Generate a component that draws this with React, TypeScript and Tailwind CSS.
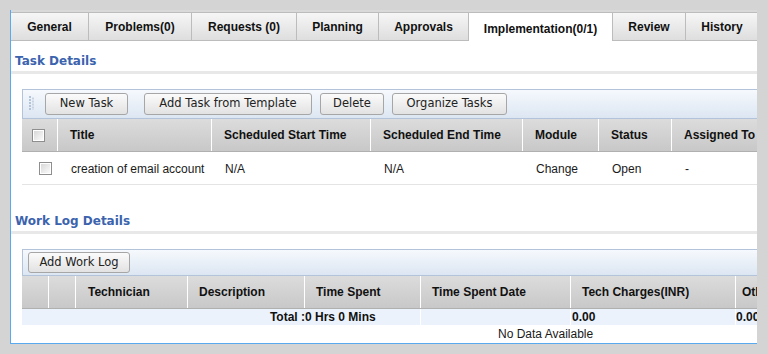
import React from "react";

const tabs = [
  { label: "General", w: 78 },
  { label: "Problems(0)", w: 103 },
  { label: "Requests (0)", w: 105 },
  { label: "Planning", w: 82 },
  { label: "Approvals", w: 90 },
  { label: "Implementation(0/1)", w: 144, active: true },
  { label: "Review", w: 73 },
  { label: "History", w: 73 },
];

function Checkbox() {
  return (
    <div className="w-[13px] h-[13px] border border-[#8e8e8e] bg-white p-[1px]">
      <div className="w-full h-full bg-linear-to-br from-[#d8d8d8] to-[#fafafa]" />
    </div>
  );
}

function Btn({ label, w }: { label: string; w: number }) {
  return (
    <div
      className="h-[22px] flex items-center justify-center border border-[#a6a6a6] rounded-[3px] bg-linear-to-b from-[#fbfbfb] to-[#e2e2e2] text-[11.5px] text-[#222] shrink-0 whitespace-nowrap"
      style={{ width: w, fontFamily: '"DejaVu Sans", Verdana, sans-serif' }}
    >
      {label}
    </div>
  );
}

function Grip() {
  return (
    <svg width="6" height="14" viewBox="0 0 6 14" className="shrink-0">
      {[0, 3, 6, 9, 12].map((y) => (
        <g key={y}>
          <rect x="0" y={y} width="2" height="2" fill="#b3c3d8" />
          <rect x="3" y={y + 1.5} width="2" height="2" fill="#c8d4e4" />
        </g>
      ))}
    </svg>
  );
}

const taskCols = [
  { label: "Title", w: 154 },
  { label: "Scheduled Start Time", w: 159 },
  { label: "Scheduled End Time", w: 152 },
  { label: "Module", w: 76 },
  { label: "Status", w: 73 },
  { label: "Assigned To", w: 110 },
];
const taskRow = ["creation of email account", "N/A", "N/A", "Change", "Open", "-"];

const wlCols = [
  { label: "", w: 27 },
  { label: "", w: 27 },
  { label: "Technician", w: 112, pl: 12 },
  { label: "Description", w: 117, pl: 11 },
  { label: "Time Spent", w: 116, pl: 11 },
  { label: "Time Spent Date", w: 150, pl: 11 },
  { label: "Tech Charges(INR)", w: 165, pl: 11 },
  { label: "Other Charges(INR)", w: 160, pl: 6 },
];

function SectionTitle({ text, h, pb }: { text: string; h: number; pb: number }) {
  return (
    <div
      className="flex items-end pl-[4px] text-[12px] font-bold text-[#3b63ae] leading-[14px] shrink-0"
      style={{ height: h, paddingBottom: pb, fontFamily: '"DejaVu Sans", Tahoma, sans-serif' }}
    >
      {text}
    </div>
  );
}

export default function App() {
  return (
    <div
      className="w-[768px] h-[354px] bg-[#d4d4d4] pt-[10px] pl-[10px] overflow-hidden"
      style={{ fontFamily: '"Liberation Sans", Arial, sans-serif' }}
    >
      <div className="w-[747px] h-[334px] bg-white border-l border-b border-[#58a9ee] overflow-hidden flex flex-col">
        {/* Tabs */}
        <div className="flex pt-[2px] bg-[#d9d9d9] shrink-0">
          {tabs.map((t) =>
            t.active ? (
              <div
                key={t.label}
                className="h-[29px] bg-white border-t border-r border-[#bcbcbc] flex items-center justify-center pt-[4px] text-[12px] font-bold text-[#111] shrink-0"
                style={{ width: t.w }}
              >
                {t.label}
              </div>
            ) : (
              <div
                key={t.label}
                className="h-[29px] bg-linear-to-b from-[#f6f6f6] to-[#dedede] border-t border-r border-b border-[#bcbcbc] flex items-center justify-center text-[12px] font-bold text-[#111] shrink-0"
                style={{ width: t.w }}
              >
                {t.label}
              </div>
            )
          )}
        </div>

        <SectionTitle text="Task Details" h={30} pb={3} />
        <div className="h-[3px] bg-[#e8e8e8] shrink-0" />

        {/* Task toolbar + table */}
        <div className="pl-[11px] pt-[15px] shrink-0">
          <div className="w-[760px] h-[30px] border-t border-b border-l border-[#b2c3da] bg-linear-to-b from-[#f6f9fd] to-[#dce6f2] flex items-start pt-[3px] pl-[6px]">
            <div className="mt-[3px] mr-[10px]">
              <Grip />
            </div>
            <Btn label="New Task" w={83} />
            <div className="w-[16px] shrink-0" />
            <Btn label="Add Task from Template" w={168} />
            <div className="w-[8px] shrink-0" />
            <Btn label="Delete" w={64} />
            <div className="w-[8px] shrink-0" />
            <Btn label="Organize Tasks" w={115} />
          </div>

          {/* header */}
          <div className="flex h-[33px] border-b border-[#b0b0b0] bg-linear-to-b from-[#dcdcdc] to-[#c8c8c8] w-[770px]">
            <div className="w-[36px] shrink-0 border-r border-white flex items-center pl-[10px]">
              <Checkbox />
            </div>
            {taskCols.map((c) => (
              <div
                key={c.label}
                className="shrink-0 border-r border-white flex items-center pl-[12px] text-[12px] font-bold text-[#111]"
                style={{ width: c.w }}
              >
                {c.label}
              </div>
            ))}
          </div>

          {/* row */}
          <div className="flex h-[33px] border-b border-[#e4e4e4] w-[770px]">
            <div className="w-[36px] shrink-0 flex items-center pl-[17px]">
              <Checkbox />
            </div>
            {taskCols.map((c, i) => (
              <div
                key={c.label}
                className="shrink-0 flex items-center pl-[13px] text-[12px] text-[#1a1a1a] pt-[1px]"
                style={{ width: c.w }}
              >
                {taskRow[i]}
              </div>
            ))}
          </div>
        </div>

        <SectionTitle text="Work Log Details" h={46} pb={3} />
        <div className="h-[3px] bg-[#e8e8e8] shrink-0" />

        <div className="pl-[11px] pt-[15px] shrink-0">
          <div className="w-[760px] h-[27px] border-t border-b border-l border-[#b2c3da] bg-linear-to-b from-[#f6f9fd] to-[#dce6f2] flex items-start pt-[2px] pl-[5px]">
            <div
              className="h-[21px] w-[102px] flex items-center justify-center border border-[#a6a6a6] rounded-[3px] bg-linear-to-b from-[#fbfbfb] to-[#e2e2e2] text-[11.5px] text-[#222] whitespace-nowrap"
              style={{ fontFamily: '"DejaVu Sans", Verdana, sans-serif' }}
            >
              Add Work Log
            </div>
          </div>

          {/* worklog header */}
          <div className="flex h-[33px] border-b border-[#b0b0b0] bg-linear-to-b from-[#dcdcdc] to-[#c8c8c8] w-[900px]">
            {wlCols.map((c, i) => (
              <div
                key={i}
                className="shrink-0 border-r border-white flex items-center text-[12px] font-bold text-[#111] whitespace-nowrap"
                style={{ width: c.w, paddingLeft: c.pl ?? 0 }}
              >
                {c.label}
              </div>
            ))}
          </div>

          {/* total row */}
          <div className="flex h-[16px] bg-[#ebf2fc] w-[900px] text-[12px] font-bold text-[#111] leading-[16px]">
            <div className="w-[283px] shrink-0 text-right">Total :</div>
            <div className="w-[116px] shrink-0 border-r border-white">0 Hrs 0 Mins</div>
            <div className="w-[150px] shrink-0 border-r border-white" />
            <div className="w-[165px] shrink-0 border-r border-white pl-[1px]">0.00</div>
            <div className="w-[160px] shrink-0">0.00</div>
          </div>

          {/* no data */}
          <div className="h-[18px] flex items-center pl-[476px] text-[12px] text-[#1a1a1a]">
            No Data Available
          </div>
        </div>
      </div>
    </div>
  );
}
